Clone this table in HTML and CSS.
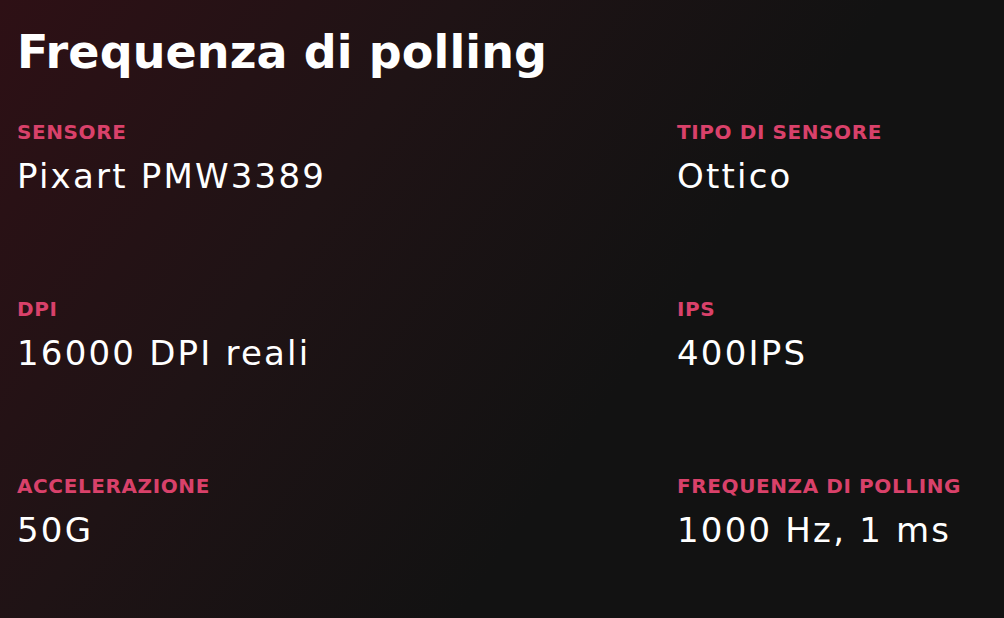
FILE: index.html
```html
<!DOCTYPE html>
<html lang="it">
<head>
<meta charset="utf-8">
<link rel="stylesheet" href="styles.css">
<title>Frequenza di polling</title>
</head>
<body>
<main class="specs">
  <h1 class="specs-title">Frequenza di polling</h1>
  <div class="specs-grid">
    <div class="spec">
      <div class="spec-label">SENSORE</div>
      <div class="spec-value">Pixart PMW3389</div>
    </div>
    <div class="spec">
      <div class="spec-label">TIPO DI SENSORE</div>
      <div class="spec-value">Ottico</div>
    </div>
    <div class="spec">
      <div class="spec-label">DPI</div>
      <div class="spec-value">16000 DPI reali</div>
    </div>
    <div class="spec">
      <div class="spec-label">IPS</div>
      <div class="spec-value">400IPS</div>
    </div>
    <div class="spec">
      <div class="spec-label">ACCELERAZIONE</div>
      <div class="spec-value">50G</div>
    </div>
    <div class="spec">
      <div class="spec-label">FREQUENZA DI POLLING</div>
      <div class="spec-value">1000 Hz, 1 ms</div>
    </div>
  </div>
</main>
</body>
</html>
```
FILE: styles.css
```css
html, body {
  margin: 0;
  height: 100%;
}
body {
  background-color: #121212;
  background-image: linear-gradient(125deg, #2e1015 0%, #1f1315 32%, #121212 62%);
  font-family: "DejaVu Sans", "Open Sans", sans-serif;
  color: #ffffff;
  overflow: hidden;
}
.specs {
  padding: 22px 0 0 17px;
}
.specs-title {
  margin: 0;
  font-size: 46px;
  line-height: 60px;
  font-weight: 700;
  letter-spacing: 0.1px;
}
.specs-grid {
  display: grid;
  grid-template-columns: 660px 1fr;
  grid-template-rows: 177px 177px auto;
  margin-top: 38px;
}
.spec-label {
  font-size: 20px;
  line-height: 24px;
  font-weight: 600;
  letter-spacing: 0.6px;
  color: #d9416a;
}
.spec-value {
  font-size: 34px;
  line-height: 40px;
  letter-spacing: 2.2px;
  margin-top: 12px;
}
```
